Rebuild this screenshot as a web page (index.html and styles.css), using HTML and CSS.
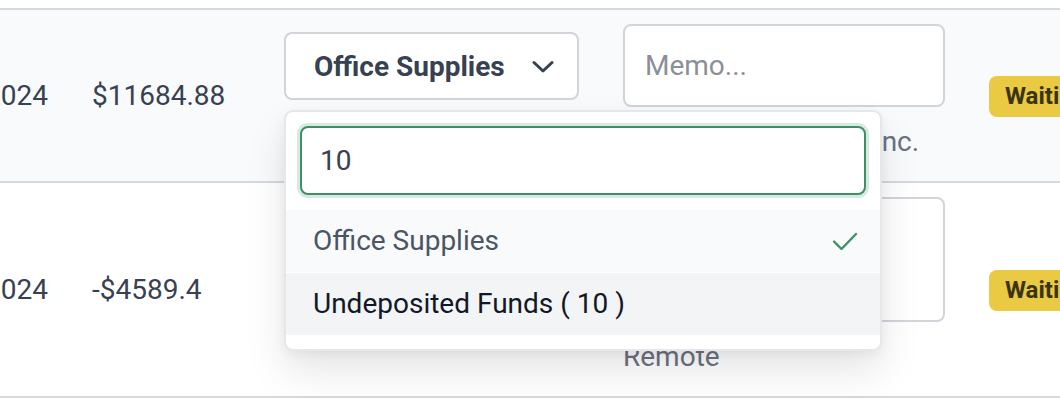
FILE: index.html
```html
<!DOCTYPE html>
<html lang="en">
<head>
    <meta charset="UTF-8">
    <meta name="viewport" content="width=device-width, initial-scale=1.0">
    <title>Transactions</title>
    <link rel="stylesheet" href="styles.css">
</head>
<body>
    <div class="table">
        <div class="row row-alt">
            <div class="cell cell-date">11/18/2024</div>
            <div class="cell cell-amount">$11684.88</div>
            <div class="cell cell-category">
                <button class="select" type="button">
                    <span>Office Supplies</span>
                    <svg class="chevron" width="22" height="14" viewBox="0 0 22 14">
                        <path d="M2 2.5 L11 11 L20 2.5" fill="none" stroke="#374151" stroke-width="3" stroke-linecap="round" stroke-linejoin="round"/>
                    </svg>
                </button>
                <div class="dropdown">
                    <div class="search-wrap">
                        <input class="search" type="text" value="10">
                    </div>
                    <ul class="options">
                        <li class="option option-selected">
                            <span>Office Supplies</span>
                            <svg width="26" height="20" viewBox="0 0 26 20">
                                <path d="M2 10.5 L9.5 18 L24 3" fill="none" stroke="#3f8f66" stroke-width="2.4" stroke-linecap="round" stroke-linejoin="round"/>
                            </svg>
                        </li>
                        <li class="option option-active">
                            <span>Undeposited Funds ( 10 )</span>
                        </li>
                    </ul>
                </div>
            </div>
            <div class="cell cell-memo">
                <input class="memo" type="text" placeholder="Memo...">
                <div class="vendor">Vandelay Industries Inc.</div>
            </div>
            <div class="cell cell-status">
                <span class="badge">Waiting...</span>
            </div>
        </div>
        <div class="row">
            <div class="cell cell-date">11/16/2024</div>
            <div class="cell cell-amount">-$4589.4</div>
            <div class="cell cell-category">
                <button class="select" type="button">
                    <span>Travel</span>
                    <svg class="chevron" width="22" height="14" viewBox="0 0 22 14">
                        <path d="M2 2.5 L11 11 L20 2.5" fill="none" stroke="#374151" stroke-width="3" stroke-linecap="round" stroke-linejoin="round"/>
                    </svg>
                </button>
            </div>
            <div class="cell cell-memo">
                <textarea class="memo memo-tall" placeholder="Memo..."></textarea>
                <div class="vendor">Remote</div>
            </div>
            <div class="cell cell-status">
                <span class="badge">Waiting...</span>
            </div>
        </div>
    </div>
</body>
</html>
```

FILE: styles.css
```css
* {
    margin: 0;
    padding: 0;
    box-sizing: border-box;
}
body {
    font-family: Roboto, 'Liberation Sans', sans-serif;
    font-size: 28px;
    line-height: 1.5;
    color: #374151;
    background: #fff;
    padding-top: 8px;
    overflow: hidden;
}
.table {
    width: 1200px;
    margin-left: -110px;
    border-top: 2px solid #d5d8dc;
}
.row {
    display: grid;
    grid-template-columns: 180px 192px 339px 366px 1fr;
    border-bottom: 2px solid #d5d8dc;
    background: #fff;
}
.row-alt {
    background: #f9fafb;
}
.cell {
    padding: 0 22px;
    align-self: center;
}
.cell-date {
    text-align: right;
    white-space: nowrap;
    padding-left: 0;
}
.cell-category {
    position: relative;
    align-self: start;
    padding-top: 22px;
}
.select {
    width: 295px;
    height: 68px;
    display: flex;
    align-items: center;
    justify-content: space-between;
    padding: 0 23px 0 28px;
    background: #fff;
    border: 2px solid #d1d5db;
    border-radius: 8px;
    font-family: inherit;
    font-size: 28px;
    font-weight: 700;
    color: #374151;
}
.chevron {
    margin-top: 2px;
}
.dropdown {
    position: absolute;
    top: 100px;
    left: 22px;
    width: 598px;
    z-index: 10;
    background: #fff;
    border: 2px solid #e5e7eb;
    border-radius: 9px;
    box-shadow: 0 20px 40px rgba(0, 0, 0, 0.10), 0 4px 12px rgba(0, 0, 0, 0.05);
    padding-top: 14px;
    padding-bottom: 14px;
}
.search-wrap {
    padding: 0 14px;
}
.search {
    width: 100%;
    height: 69px;
    padding: 0 18px;
    border: 2px solid #3f8f66;
    border-radius: 8px;
    box-shadow: 0 0 0 3px #d7eadf;
    outline: none;
    font-family: inherit;
    font-size: 28px;
    color: #374151;
}
.options {
    list-style: none;
    margin-top: 15px;
}
.option {
    height: 62px;
    display: flex;
    align-items: center;
    justify-content: space-between;
    padding: 0 22px 0 27px;
    font-size: 28px;
}
.option-selected {
    background: #f9fafb;
    color: #4b5563;
}
.option-active {
    background: #f3f4f6;
    color: #111827;
    margin-top: 1px;
}
.cell-memo {
    padding-top: 14px;
    padding-bottom: 18px;
}
.memo {
    display: block;
    width: 322px;
    height: 83px;
    padding: 0 20px;
    background: #fff;
    border: 2px solid #d1d5db;
    border-radius: 8px;
    font-family: inherit;
    font-size: 28px;
    color: #374151;
    outline: none;
}
.memo::placeholder {
    color: #8a8f98;
}
.memo-tall {
    height: 125px;
    resize: none;
    padding-top: 16px;
}
.vendor {
    margin-top: 14px;
    color: #6b7280;
    white-space: nowrap;
}
.badge {
    display: inline-block;
    height: 41px;
    line-height: 41px;
    padding: 0 16px;
    background: #eac943;
    color: #3b3412;
    border-radius: 8px;
    font-size: 24px;
    font-weight: 700;
    white-space: nowrap;
}
```
